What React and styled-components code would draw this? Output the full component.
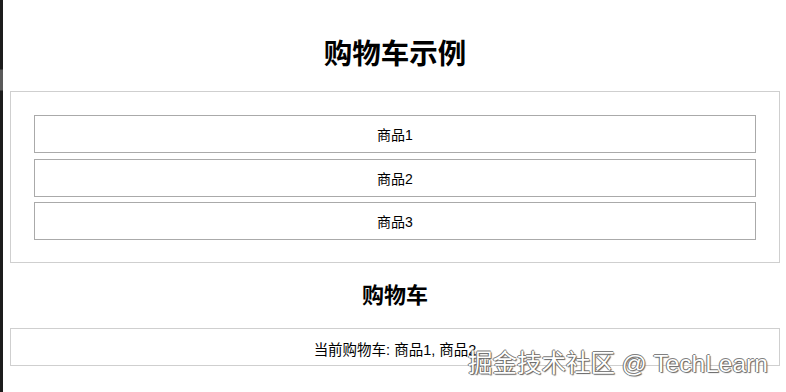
import React from 'react';
import styled, { createGlobalStyle } from 'styled-components';

const GlobalStyle = createGlobalStyle`
  html, body {
    margin: 0;
    padding: 0;
    background: #fff;
    overflow: hidden;
  }
  body {
    font-family: "Liberation Sans", "Noto Sans CJK SC", sans-serif;
    color: #000;
  }
`;

const Page = styled.div`
  display: flex;
  width: 786px;
  height: 392px;
  position: relative;
`;

const EdgeStrip = styled.div`
  width: 3px;
  flex-shrink: 0;
  background: linear-gradient(
    to bottom,
    #1c1c1c 0px,
    #1c1c1c 69px,
    #5a5a5a 70px,
    #5a5a5a 90px,
    #1c1c1c 91px,
    #1c1c1c 100%
  );
`;

const Main = styled.main`
  flex: 1;
  display: flex;
  flex-direction: column;
  padding: 0 6px 0 7px;
`;

const Title = styled.h1`
  margin: 38px 0 0;
  font-size: 28.5px;
  line-height: 32px;
  font-weight: 700;
  text-align: center;
`;

const ProductPanel = styled.section`
  margin-top: 21px;
  border: 1px solid #cfcfcf;
  padding: 23px 23px 22px;
  display: flex;
  flex-direction: column;
  gap: 5.5px;
`;

const ProductItem = styled.div`
  height: 36px;
  border: 1px solid #aaa;
  display: flex;
  align-items: center;
  justify-content: center;
  font-size: 14px;
`;

const CartHeading = styled.h2`
  margin: 18px 0 0;
  font-size: 22px;
  line-height: 30px;
  font-weight: 700;
  text-align: center;
`;

const CartBox = styled.div`
  margin-top: 17px;
  height: 38px;
  box-sizing: border-box;
  padding-top: 2px;
  border: 1px solid #cfcfcf;
  display: flex;
  align-items: center;
  justify-content: center;
  font-size: 14.5px;
`;

const Watermark = styled.div`
  position: absolute;
  top: 350px;
  left: 468px;
  font-size: 24.5px;
  line-height: 28px;
  color: #fff;
  white-space: nowrap;
  text-shadow: 0 0 1px #444, 1px 1px 1px #666, -1px 0 0 #888, 0 -1px 0 #888;
`;

const products = ['商品1', '商品2', '商品3'];
const cart = ['商品1', '商品2'];

export default function App() {
  return (
    <>
      <GlobalStyle />
      <Page>
        <EdgeStrip />
        <Main>
          <Title>购物车示例</Title>
          <ProductPanel>
            {products.map((p) => (
              <ProductItem key={p}>{p}</ProductItem>
            ))}
          </ProductPanel>
          <CartHeading>购物车</CartHeading>
          <CartBox>当前购物车: {cart.join(', ')}</CartBox>
        </Main>
        <Watermark>掘金技术社区 @ TechLearn</Watermark>
      </Page>
    </>
  );
}
